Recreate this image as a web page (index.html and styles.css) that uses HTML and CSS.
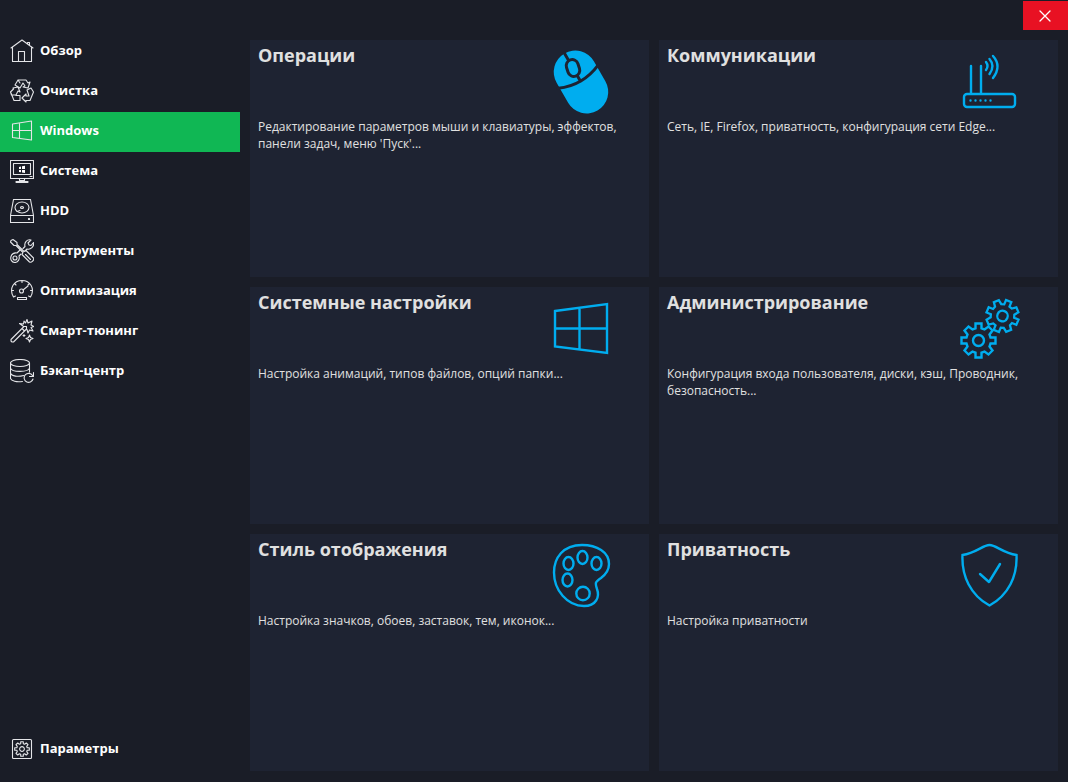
FILE: index.html
```html
<!DOCTYPE html>
<html lang="ru">
<head>
<meta charset="utf-8">
<title>Windows</title>
<link rel="stylesheet" href="styles.css">
</head>
<body>
<div class="app">
  <button class="close" type="button" aria-label="Закрыть">
    <svg class="close-icon" viewBox="0 0 12 12"><path d="M1 1 11 11M11 1 1 11"/></svg>
  </button>
  <nav class="sidebar">
    <a class="item" href="#"><svg class="icon" viewBox="0 0 24 24"><path d="M1 9 12 1l11 8M2.500 8.500v14h19v-14M8.500 22.500v-10h6v10M17.500 4.500v-1h2v3"/></svg><span class="label">Обзор</span></a>
    <a class="item" href="#"><svg class="icon" viewBox="0 0 24 24"><path d="M8 1h8l2 3 2-1-2 6-5-1 2-1-2-3-3 5-5-3zM10 4 8 1M3 9l5-1 2 5-2-1-2 4H1.500L.500 13l3-3zM1 14l3 7.500h6v-5H6M17 11l4-2 2.500 4-3.500 8.500h-4V23l-4-4 4-4v2h3z"/></svg><span class="label">Очистка</span></a>
    <a class="item item-active" href="#" aria-current="page"><svg class="icon" viewBox="0 0 24 24"><path d="M2.500 5 21.500 2v19L2.500 18.500zM9.500 4v15.500M2.500 11.500h19"/></svg><span class="label">Windows</span></a>
    <a class="item" href="#"><svg class="icon" viewBox="0 0 24 24"><path d="M.500 1.500h23v18H.500zM3.500 4.500h17v11h-17zM9.500 19.500v2h5v-2M6 22.500h12M6 23.500h12M20 17.500h2"/><path class="solid" d="M9 8l2-.5v2.500H9zM12 7.300l3-.5V10h-3zM9 11h2v2.300L9 13zM12 11h3v3l-3-.5z"/></svg><span class="label">Система</span></a>
    <a class="item" href="#"><svg class="icon" viewBox="0 0 24 24"><path d="M3.500.500h17l3 16v7H.500v-7zM.500 16.500h23"/><ellipse cx="12" cy="8.500" rx="7" ry="5.500"/><ellipse cx="12" cy="8.500" rx="1.500" ry="1"/><path d="M7 12.500l3-1M18.500 19.500v1h1v-1z"/></svg><span class="label">HDD</span></a>
    <a class="item" href="#"><svg class="icon" viewBox="0 0 24 24"><path d="M1 1.500l2-1 4 3v2l7 7 2-1 7.500 7.500c1 2-2 5-4 4L12 15.500l1-2-7-7H4L.500 3zM15.500 15.500l5 5"/><path d="M13 9.500l2-2c-1-4 2-7.500 6-6.500L18 4l1 2 2 .500 2.500-3c1 4-3 7.500-6.500 6.500l-2 2M11 15l-2 2c1 3-1 6.500-4 6.500s-5-3-4-6 3-4 6-3.500l3-3"/><circle cx="5" cy="19" r="2"/></svg><span class="label">Инструменты</span></a>
    <a class="item" href="#"><svg class="icon" viewBox="0 0 24 24"><path d="M3.500 18C-1.500 9.500 4 1.500 12 1.500S25.500 9.500 20.500 18l-2-1M3.500 18l2-1M12 1.500v2M4.500 4.500 6 6M1.500 11.500h2M20.500 11.500h2M19.500 4.500 18 6M13 11l5-4"/><circle cx="11.500" cy="12" r="2"/><path d="M7.500 18.500h9v2h-9z"/></svg><span class="label">Оптимизация</span></a>
    <a class="item" href="#"><svg class="icon" viewBox="0 0 24 24"><path d="M1 20.500 14 7.500h2.500V10L3.500 23H2l-1-1zM12 9.500l2 2M13 7 9.500 4.500l4 .500.500-3 1.500 2L17 .500l1 3.500 4-2-1 4 3 1.500-3 1 2 3.500-3.500-1-1.500 3-1-3.500"/><path d="M19.500 16l1 2.500 2.500 1-2.500 1-1 2.500-1-2.500-2.500-1 2.500-1zM14 15.500v2M13 16.500h2"/></svg><span class="label">Смарт-тюнинг</span></a>
    <a class="item" href="#"><svg class="icon" viewBox="0 0 24 24"><ellipse cx="10" cy="4" rx="9.500" ry="3.500"/><path d="M.500 4v15.500c1 2.500 6 4 12 3M19.500 4v9M.500 9c1 4.500 18 4.500 19 0M.500 14c1 3.500 8 4 13 2.500M22.500 16.500A4.500 4.500 0 1 0 23 20M23.500 13.500v4h-4"/></svg><span class="label">Бэкап-центр</span></a>
    <a class="item item-bottom" href="#"><svg class="icon" viewBox="0 0 24 24"><rect x="2.500" y="2.500" width="19" height="19" rx="1"/><g class="small-gear" transform="translate(12 12) scale(.43)"><path d="M-3-12v-5h6v5l3 1 4-3 4 4-3 4 1 3h5v6h-5l-1 3 3 4-4 4-4-3-3 1v5h-6v-5l-3-1-4 3-4-4 3-4-1-3h-5v-6h5l1-3-3-4 4-4 4 3z"/><circle r="5.500"/></g></svg><span class="label">Параметры</span></a>
  </nav>
  <main class="grid">
    <a class="card" href="#">
      <div class="head"><h2 class="title">Операции</h2>
        <svg class="art" viewBox="0 0 64 64"><g transform="translate(32 32) rotate(-30)"><rect class="fill" x="-21.500" y="-33" width="43" height="66" rx="21.500"/><path class="cut" d="M-23-6Q0 4 23-6M0-34v13M0-9v8"/></g><rect class="cut fill" transform="translate(24 18) rotate(-18)" x="-6" y="-8.500" width="12" height="17" rx="6"/></svg></div>
      <p class="text">Редактирование параметров мыши и клавиатуры, эффектов, панели задач, меню 'Пуск'...</p>
    </a>
    <a class="card" href="#">
      <div class="head"><h2 class="title">Коммуникации</h2>
        <svg class="art" viewBox="0 0 64 64"><rect x="6" y="44" width="51" height="13" rx="3"/><path d="M13 43V16M23 43V16M28 12q3 4 0 8M31.500 9q6 7 0 15M35 6q9 10 0 22"/><path class="dots" d="M12.500 50.500h22"/></svg></div>
      <p class="text">Сеть, IE, Firefox, приватность, конфигурация сети Edge...</p>
    </a>
    <a class="card" href="#">
      <div class="head"><h2 class="title">Системные настройки</h2>
        <svg class="art" viewBox="0 0 64 64"><path class="miter" d="M6 14 58 7v49L6 49.500zM30.500 11v41M6 31.500h52"/></svg></div>
      <p class="text">Настройка анимаций, типов файлов, опций папки...</p>
    </a>
    <a class="card" href="#">
      <div class="head"><h2 class="title">Администрирование</h2>
        <svg class="art" viewBox="0 0 64 64"><g transform="translate(20.500 43.500)"><path class="miter" d="M-3-12v-5h6v5l3 1 4-3 4 4-3 4 1 3h5v6h-5l-1 3 3 4-4 4-4-3-3 1v5h-6v-5l-3-1-4 3-4-4 3-4-1-3h-5v-6h5l1-3-3-4 4-4 4 3z"/><circle r="5.500"/></g><g transform="translate(44.500 19) rotate(22.500) scale(.95)"><path class="miter" d="M-3-12v-5h6v5l3 1 4-3 4 4-3 4 1 3h5v6h-5l-1 3 3 4-4 4-4-3-3 1v5h-6v-5l-3-1-4 3-4-4 3-4-1-3h-5v-6h5l1-3-3-4 4-4 4 3z"/><circle r="5.500"/></g></svg></div>
      <p class="text">Конфигурация входа пользователя, диски, кэш, Проводник, безопасность...</p>
    </a>
    <a class="card" href="#">
      <div class="head"><h2 class="title">Стиль отображения</h2>
        <svg class="art" viewBox="0 0 64 64"><path d="M33 1C14 1 5 14 5 28.500 5 46 18 62 35 62c12 0 16-9 13-17-2-6-2-7 4-11 4-3 8-8 8-14C60 8 48 1 33 1z"/><ellipse cx="19.500" cy="19.500" rx="5" ry="6.500"/><ellipse cx="33.500" cy="13.500" rx="5" ry="6.500"/><ellipse cx="47.500" cy="19.500" rx="5" ry="6.500"/><ellipse cx="18.500" cy="36" rx="5" ry="6.500"/><circle cx="34" cy="49.500" r="6.700"/></svg></div>
      <p class="text">Настройка значков, обоев, заставок, тем, иконок...</p>
    </a>
    <a class="card" href="#">
      <div class="head"><h2 class="title">Приватность</h2>
        <svg class="art" viewBox="0 0 64 64"><path class="miter" d="M4.500 11C18 9 25 1 31.500 1S45 9 58.500 11c1 21-8 40-27 50.500C12.500 51 3.500 32 4.500 11z"/><path d="M22 30l9 8 11-18"/></svg></div>
      <p class="text">Настройка приватности</p>
    </a>
  </main>
</div>
</body>
</html>
```

FILE: styles.css
```css
* {
  box-sizing: border-box;
}

body {
  margin: 0;
  background: #1a1d27;
  color: #fff;
  font-family: "Open Sans", "Noto Sans", sans-serif;
}

a {
  color: inherit;
  text-decoration: none;
}

svg {
  flex: none;
  fill: none;
  stroke-linecap: round;
  stroke-linejoin: round;
}

.app {
  display: grid;
  grid-template-columns: 240px 1fr;
  min-height: 100vh;
}

.close {
  position: absolute;
  top: 1px;
  right: 0;
  display: flex;
  align-items: center;
  justify-content: center;
  width: 45px;
  height: 29px;
  padding: 0 1px 0 0;
  border: 0;
  background: #e81123;
}

.close-icon {
  width: 12px;
  height: 12px;
  stroke: #fff;
  stroke-width: 1.3;
}

.sidebar {
  display: flex;
  flex-direction: column;
  padding: 32px 0 12px;
}

.item {
  display: flex;
  align-items: center;
  gap: 6px;
  height: 40px;
  padding: 0 10px 2px;
}

.item-active {
  background: #10b754;
}

.item-bottom {
  margin-top: auto;
}

.label {
  padding-bottom: 2px;
  font-size: 13px;
  font-weight: 700;
  line-height: 18px;
}

.icon {
  width: 24px;
  height: 24px;
  stroke: #e4e5e8;
  stroke-width: 1.1;
}

.icon .solid {
  fill: #fff;
  stroke: none;
}

.small-gear {
  stroke-width: 2.6;
}

.grid {
  display: grid;
  grid-template-columns: 1fr 1fr;
  grid-template-rows: repeat(3, 1fr);
  gap: 10px;
  padding: 40px 10px 11px;
}

.card {
  padding: 0 8px;
  background: #1e2332;
}

.head {
  display: flex;
  justify-content: space-between;
  padding-right: 28px;
}

.title {
  margin: 3px 0 0;
  color: #e0e0e0;
  font-size: 18px;
  font-weight: 700;
  line-height: 25px;
}

.art {
  width: 64px;
  height: 64px;
  margin-top: 10px;
  overflow: visible;
  stroke: #00adef;
  stroke-width: 2.4;
}

.art .fill {
  fill: #00adef;
  stroke: none;
}

.art .cut {
  stroke: #1e2332;
  stroke-width: 3;
}

.art .miter {
  stroke-linejoin: miter;
}

.art .dots {
  stroke-dasharray: 0 5;
}

.text {
  margin: 4px 0 0;
  color: #e0e0e0;
  font-size: 12px;
  line-height: 17px;
}
```
